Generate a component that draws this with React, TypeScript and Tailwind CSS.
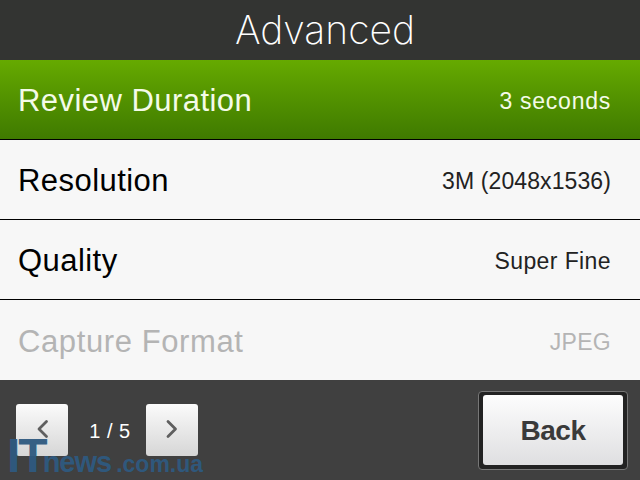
const rows = [
  { label: "Review Duration", value: "3 seconds", state: "active", labelClass: "tracking-[0.45px]", valueClass: "tracking-[0.75px]" },
  { label: "Resolution", value: "3M (2048x1536)", state: "normal", labelClass: "tracking-[0.45px]", valueClass: "tracking-[0.1px] text-[#222]" },
  { label: "Quality", value: "Super Fine", state: "normal", labelClass: "tracking-[0.45px]", valueClass: "tracking-[0.4px] text-[#222]" },
  { label: "Capture Format", value: "JPEG", state: "disabled", labelClass: "tracking-[0.6px]", valueClass: "tracking-[0.3px]" },
];

const Chevron = ({ dir }: { dir: "left" | "right" }) => (
  <svg width="14" height="22" viewBox="0 0 14 22" fill="none">
    <path
      d={dir === "left" ? "M11.5 2.5 L4 10 L11.5 17.5" : "M3 2.5 L10.5 10 L3 17.5"}
      stroke="#5f5f5f"
      strokeWidth="2.8"
      strokeLinecap="round"
      strokeLinejoin="round"
    />
  </svg>
);

export default function App() {
  return (
    <div className="relative flex h-[480px] w-[640px] flex-col overflow-hidden bg-[#f7f7f7] font-['Liberation_Sans',sans-serif]">
      <header className="flex h-[60px] items-center justify-center bg-[#333432] pl-[10px]">
        <h1 className="font-['Inter',sans-serif] text-[39px] font-extralight text-white">Advanced</h1>
      </header>

      {rows.map((row) => (
        <div
          key={row.label}
          className={
            row.state === "active"
              ? "flex h-[80px] items-center justify-between border-b border-black bg-gradient-to-b from-[#66aa00] to-[#3f7a00] pl-[18px] pr-[29px] pt-[4px] text-[#f4fbe8]"
              : row.state === "disabled"
                ? "flex h-[80px] items-center justify-between bg-[#f7f7f7] pl-[18px] pr-[29px] pt-[4px] text-[#b4b4b4]"
                : "flex h-[80px] items-center justify-between border-b border-black bg-[#f7f7f7] pl-[18px] pr-[29px] pt-[4px] text-black"
          }
        >
          <span className={`text-[31px] ${row.labelClass}`}>{row.label}</span>
          <span className={`text-[23px] ${row.valueClass}`}>{row.value}</span>
        </div>
      ))}

      <footer className="flex h-[100px] items-start justify-between bg-[#404040] pl-4 pr-3 pt-[11px]">
        <div className="mt-[13px] flex items-center">
          <button className="flex h-[52px] w-[52px] items-center justify-center rounded-[3px] bg-gradient-to-b from-[#fbfbfb] to-[#d6d6d6]">
            <Chevron dir="left" />
          </button>
          <span className="w-[78px] pl-[6px] pt-[2px] text-center text-[20px] tracking-[0.5px] text-white">1 / 5</span>
          <button className="flex h-[52px] w-[52px] items-center justify-center rounded-[3px] bg-gradient-to-b from-[#fbfbfb] to-[#d6d6d6]">
            <Chevron dir="right" />
          </button>
        </div>
        <div className="h-[79px] w-[150px] rounded-[4px] border border-[#777] bg-[#222] px-[4px] pb-[4px] pt-[3px]">
          <button className="flex h-full w-full items-center justify-center rounded-[3px] bg-gradient-to-b from-[#fdfdfd] to-[#dfdfe1] pt-[2px] text-[28px] font-bold tracking-[-0.5px] text-[#3a3a3a]">
            Back
          </button>
        </div>
      </footer>

      {/* site watermark over the footer */}
      <div className="pointer-events-none absolute left-[7px] top-[432px] flex items-baseline leading-none text-[#2f5a80] opacity-95">
        <span className="text-[48px] font-bold tracking-[-2px]">IT</span>
        <span className="-ml-[3px] text-[29px] font-bold tracking-[-1px]">news</span>
        <span className="ml-[5px] text-[23px] font-bold">.com.ua</span>
      </div>
    </div>
  );
}
